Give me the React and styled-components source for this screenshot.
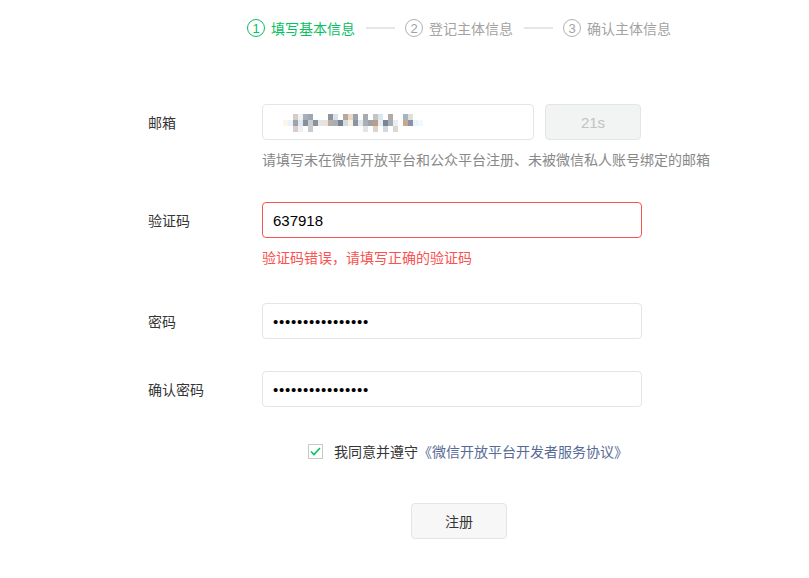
import React from 'react';
import styled, { createGlobalStyle } from 'styled-components';

const GlobalStyle = createGlobalStyle`
  body {
    margin: 0;
    background: #ffffff;
    font-family: "Noto Sans CJK SC", "Noto Sans", sans-serif;
    color: #353535;
  }
`;

const Page = styled.div`
  width: 809px;
  height: 578px;
  overflow: hidden;
  background: #fff;
`;

const Steps = styled.div`
  display: flex;
  align-items: center;
  height: 18px;
  padding: 19px 0 0 247px;
`;

const Step = styled.div`
  display: flex;
  align-items: center;
  gap: 6px;
  font-size: 14px;
  line-height: 18px;
  color: ${props => props.active ? '#07c160' : '#a3a3a3'};
`;

const StepNum = styled.span`
  box-sizing: border-box;
  width: 18px;
  height: 18px;
  border-radius: 50%;
  border: 1px solid ${props => props.active ? '#07c160' : '#b2b2b2'};
  display: flex;
  align-items: center;
  justify-content: center;
  font-family: "Liberation Sans", sans-serif;
  font-size: 13px;
  line-height: 1;
`;

const StepLine = styled.span`
  width: 29px;
  height: 2px;
  background: #e2e5e9;
  margin: 0 10px 0 11px;
`;

const Form = styled.div`
  padding: 67px 0 0 148px;
`;

const Field = styled.div`
  display: flex;
  margin-bottom: ${props => props.gap || 33}px;
`;

const Label = styled.div`
  width: 114px;
  font-size: 14px;
  line-height: 36px;
  color: #353535;
`;

const Control = styled.div`
  display: flex;
  flex-direction: column;
`;

const InputRow = styled.div`
  display: flex;
  gap: 11px;
`;

const Box = styled.div`
  box-sizing: border-box;
  width: ${props => props.width || 380}px;
  height: 36px;
  border: 1px solid ${props => props.error ? '#fa5151' : '#e5e5e5'};
  border-radius: 4px;
  display: flex;
  align-items: center;
  padding: 0 10px;
  background: #fff;
`;

const TextInput = styled.input`
  border: none;
  outline: none;
  padding: 0;
  width: 100%;
  font-family: "Liberation Sans", sans-serif;
  font-size: 15px;
  color: #000;
  background: transparent;
  letter-spacing: ${props => props.type === 'password' ? '0.75px' : '0'};
`;

const CodeButton = styled.div`
  box-sizing: border-box;
  width: 96px;
  height: 36px;
  border: 1px solid #e5e5e5;
  border-radius: 4px;
  background: #f2f3f3;
  color: #c2c2c2;
  font-family: "Liberation Sans", sans-serif;
  font-size: 15px;
  display: flex;
  align-items: center;
  justify-content: center;
`;

const Helper = styled.div`
  margin-top: 9px;
  font-size: 14px;
  line-height: 20px;
  color: ${props => props.error ? '#fa5151' : '#888888'};
`;

const Agree = styled.div`
  display: flex;
  align-items: center;
  gap: 11px;
  margin: 1px 0 0 160px;
  height: 20px;
  font-size: 14px;
  color: #353535;
`;

const Check = styled.span`
  box-sizing: border-box;
  width: 15px;
  height: 15px;
  border: 1px solid #c9c9c9;
  display: flex;
  align-items: center;
  justify-content: center;
`;

const Link = styled.a`
  color: #576b95;
  text-decoration: none;
`;

const Submit = styled.button`
  box-sizing: border-box;
  display: block;
  width: 96px;
  height: 36px;
  margin: 42px 0 0 263px;
  border: 1px solid #e5e5e5;
  border-radius: 4px;
  background: #f7f7f7;
  color: #353535;
  font-family: "Noto Sans CJK SC", sans-serif;
  font-size: 14px;
`;

// blurred email address, drawn as a mosaic of 5px cells ('' = empty)
const mosaic = [
  ['', '', '', '#d8ccc6', '#eef4f4', '#a6b0bc', '#9ea6b2', '', '', '', '#8e939c', '#d6e2ec', '', '#b8a79c', '#ecd8c4', '#9aa2ae', '', '#a8aaae', '', '#c4c4c6', '#d8e8f0', '', '#b4aaa4', '', '', '#a8b4c0', '#e0e0d8', '', '', ''],
  ['', '#fbf6e6', '#eef2f6', '#a0a2aa', '#dfe8ee', '#8a8e98', '#c4ccd4', '#8e9298', '#e2e6ea', '#eae2d8', '#b8aea8', '#a8aeb8', '#7c808a', '#d0dce6', '#fbf0dc', '#8c949e', '#dfe9ef', '#a9aeb4', '#9ba2ac', '#bc9e86', '#e6eef4', '#7c8494', '#a4acb8', '#e8eef4', '', '#c8a88c', '#8c90a8', '#e6f6fc', '#eefaff', ''],
  ['', '', '', '#d8cccc', '#eef0f6', '', '#c4ccd4', '', '', '', '', '', '', '', '', '', '', '#e4e4e8', '', '#dcd4cc', '', '#d4d8de', '', '#ded6d2', '', '', '', '', '', ''],
];

const BlurredEmail = () => (
  <svg width="150" height="18" viewBox="0 0 150 18" style={{ marginLeft: 5, marginTop: 1 }}>
    {mosaic.map((row, r) =>
      row.map((c, i) =>
        c ? <rect key={`${r}-${i}`} x={i * 5} y={r * 6} width="5" height="6" fill={c} /> : null
      )
    )}
  </svg>
);

const App = () => (
  <Page>
    <GlobalStyle />
    <Steps>
      <Step active>
        <StepNum active>1</StepNum>
        填写基本信息
      </Step>
      <StepLine />
      <Step>
        <StepNum>2</StepNum>
        登记主体信息
      </Step>
      <StepLine />
      <Step>
        <StepNum>3</StepNum>
        确认主体信息
      </Step>
    </Steps>

    <Form>
      <Field gap={33}>
        <Label>邮箱</Label>
        <Control>
          <InputRow>
            <Box width={272}>
              <BlurredEmail />
            </Box>
            <CodeButton>21s</CodeButton>
          </InputRow>
          <Helper>请填写未在微信开放平台和公众平台注册、未被微信私人账号绑定的邮箱</Helper>
        </Control>
      </Field>

      <Field gap={36}>
        <Label>验证码</Label>
        <Control>
          <Box error>
            <TextInput defaultValue="637918" />
          </Box>
          <Helper error>验证码错误，请填写正确的验证码</Helper>
        </Control>
      </Field>

      <Field gap={32}>
        <Label>密码</Label>
        <Control>
          <Box>
            <TextInput type="password" defaultValue="abcdefghijklmnop" />
          </Box>
        </Control>
      </Field>

      <Field gap={34}>
        <Label>确认密码</Label>
        <Control>
          <Box>
            <TextInput type="password" defaultValue="abcdefghijklmnop" />
          </Box>
        </Control>
      </Field>

      <Agree>
        <Check>
          <svg width="11" height="9" viewBox="0 0 11 9">
            <path d="M1 4.5 L4 7.5 L10 1" fill="none" stroke="#07c160" strokeWidth="1.6" />
          </svg>
        </Check>
        <span>
          我同意并遵守<Link href="#">《微信开放平台开发者服务协议》</Link>
        </span>
      </Agree>

      <Submit>注册</Submit>
    </Form>
  </Page>
);

export default App;
